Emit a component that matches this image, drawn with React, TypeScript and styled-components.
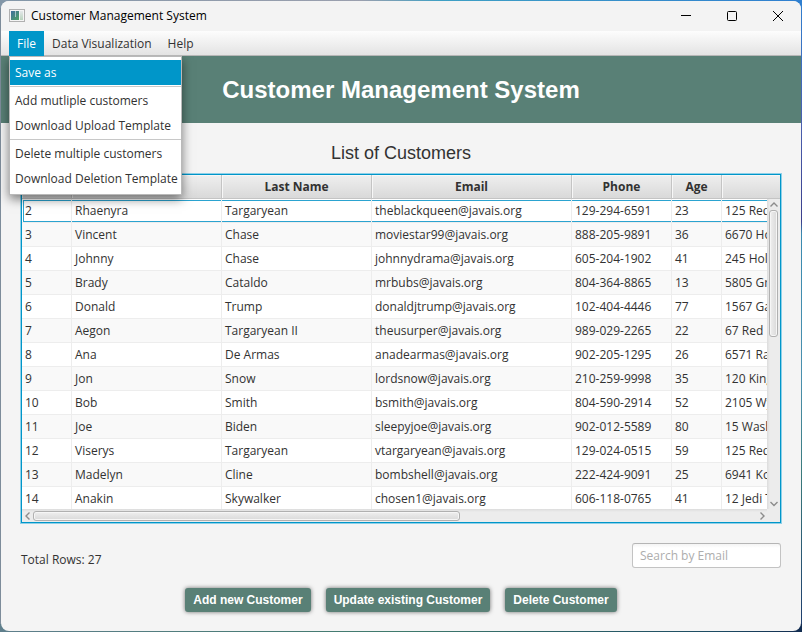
import React from 'react';
import styled, { createGlobalStyle, css } from 'styled-components';

const accent = '#0096c9';
const green = '#598076';

const GlobalStyle = createGlobalStyle`
  * { box-sizing: border-box; }
  html, body { margin: 0; height: 100%; }
  body { font: 12px/16px "Open Sans", "Noto Sans", sans-serif; color: #323232; }
  button, input { font: inherit; color: inherit; }
`;

const Desktop = styled.div`
  display: flex;
  height: 100vh;
  min-height: 480px;
  padding: 1px;
  background:
    linear-gradient(90deg, #8397a8 0%, #9a9fae 45%, #3d9fc4 55%, #2f7fd0 100%) top / 100% 8px no-repeat,
    linear-gradient(90deg, #5f7f8c 0%, #3f7a6c 50%, #1c4a63 90%, #122c50 100%) bottom / 100% 8px no-repeat,
    linear-gradient(180deg, #2f7fd0 0%, #4a5fae 20%, #3a3f8c 35%, #3a8ab0 37%, #4a90ae 60%, #3a7a7c 75%, #1c3a6c 100%) right / 8px 100% no-repeat,
    #7d8c9a;
`;

const Window = styled.div`
  flex: 1;
  min-width: 0;
  display: flex;
  flex-direction: column;
  border-radius: 8px;
  background: #f4f4f4;
`;

const TitleBar = styled.header`
  display: flex;
  align-items: center;
  height: 30px;
  flex: none;
  padding-left: 8px;
  border-radius: 8px 8px 0 0;
  background: #f3f3f3;
  color: #000;
`;

const WindowTitle = styled.span`
  flex: 1;
  padding-left: 6px;
`;

const CaptionButton = styled.button`
  display: grid;
  place-items: center;
  width: 46px;
  height: 30px;
  padding: 0;
  border: 0;
  background: none;
`;

const MenuBar = styled.nav`
  position: relative;
  z-index: 2;
  display: flex;
  flex: none;
  height: 25px;
  padding-left: 8px;
  border-bottom: 1px solid #b6b6b6;
  background: linear-gradient(#fdfdfd, #e3e3e3);
`;

const MenuButton = styled.button<{ $open?: boolean }>`
  height: 25px;
  padding: 0 8px;
  border: 0;
  background: ${p => (p.$open ? accent : 'none')};
  color: ${p => (p.$open ? '#fff' : '#323232')};
`;

const Menu = styled.div`
  position: absolute;
  top: 25px;
  left: 8px;
  width: 173px;
  padding: 3px 0;
  border: 1px solid #b9b9b9;
  background: #fff;
  box-shadow: 0 4px 10px rgba(0, 0, 0, 0.5);
  clip-path: inset(0 -20px -20px -20px);
`;

const MenuItem = styled.button<{ $active?: boolean }>`
  display: block;
  width: 100%;
  height: 25px;
  padding: 0 5px;
  border: 0;
  text-align: left;
  white-space: nowrap;
  background: ${p => (p.$active ? accent : 'none')};
  color: ${p => (p.$active ? '#fff' : '#323232')};
`;

const Separator = styled.hr`
  height: 1px;
  margin: 1px 0;
  border: 0;
  background: #c8c8c8;
`;

const Banner = styled.div`
  display: grid;
  place-items: center;
  flex: none;
  height: 67px;
  background: ${green};
`;

const BannerTitle = styled.h1`
  margin: 0;
  font: bold 24px/28px "Liberation Sans", Arial, sans-serif;
  color: #fff;
`;

const Content = styled.main`
  flex: 1;
  min-height: 0;
  display: flex;
  flex-direction: column;
  padding: 20px 20px 19px;
`;

const SectionTitle = styled.h2`
  margin: 0 0 10px;
  font: 18px/21px "Liberation Sans", Arial, sans-serif;
  text-align: center;
`;

const TableFrame = styled.div`
  flex: 1;
  min-height: 0;
  display: grid;
  grid-template: 24px minmax(0, 1fr) 13px / minmax(0, 1fr) 13px;
  border: 1px solid ${accent};
  box-shadow: 0 0 0 1px #8fd0e8;
  background: #ececec;
`;

const TableViewport = styled.div`
  grid-area: 1 / 1 / 3 / 3;
  overflow: hidden;
  background: #fff;
`;

const Table = styled.table`
  width: 0;
  min-width: 1300px;
  table-layout: fixed;
  border-collapse: separate;
  border-spacing: 0;
`;

const Col = styled.col<{ $width: number }>`
  width: ${p => p.$width}px;
`;

const HeadCell = styled.th`
  height: 24px;
  padding: 0;
  border-right: 1px solid #c4c4c4;
  border-bottom: 1px solid #c4c4c4;
  background: linear-gradient(#efefef, #d9d9d9);
  box-shadow: inset 1px 1px 0 #f7f7f7;
  font-weight: bold;
`;

const Row = styled.tr<{ $focused?: boolean }>`
  &:nth-child(even) { background: #f9f9f9; }
  ${p => p.$focused && css`
    td {
      box-shadow: inset 0 1px 0 #fff, inset 0 2px 0 #2ba3d0, inset 0 -1px 0 #2ba3d0;
    }
    td:first-child {
      box-shadow: inset 1px 1px 0 #fff, inset 2px 2px 0 #2ba3d0, inset 0 -1px 0 #2ba3d0;
    }
  `}
`;

const Cell = styled.td`
  height: 24px;
  padding: 0 3px;
  border-right: 1px solid #ededed;
  border-bottom: 1px solid #ededed;
  white-space: nowrap;
  overflow: hidden;
`;

const ScrollBar = styled.div<{ $vertical?: boolean }>`
  display: flex;
  align-items: center;
  z-index: 1;
  background: linear-gradient(${p => (p.$vertical ? '90deg' : '180deg')}, #dcdcdc, #ececec 3px);
  ${p => p.$vertical
    ? css`grid-area: 2 / 2; flex-direction: column;`
    : css`grid-area: 3 / 1;`}
`;

const Track = styled.div`
  display: flex;
  flex: 1;
  align-self: stretch;
`;

const Thumb = styled.div<{ $vertical?: boolean }>`
  border: 1px solid #b0b0b0;
  border-radius: 3px;
  box-shadow: inset 0 0 0 1px #f6f6f6;
  ${p => p.$vertical
    ? css`width: 9px; height: 44%; margin: 0 2px; background: linear-gradient(90deg, #efefef, #d9d9d9);`
    : css`height: 10px; width: 59%; margin: 2px 0 1px; background: linear-gradient(#efefef, #d9d9d9);`}
`;

const ArrowButton = styled.button`
  display: grid;
  place-items: center;
  flex: none;
  width: 11px;
  height: 11px;
  padding: 0;
  border: 0;
  background: none;
`;

const InfoRow = styled.div`
  display: flex;
  justify-content: space-between;
  align-items: center;
  flex: none;
  margin-top: 20px;
`;

const TotalRows = styled.span`
  padding-top: 8px;
`;

const SearchInput = styled.input`
  width: 149px;
  height: 25px;
  padding: 0 7px;
  border: 1px solid #c3c3c3;
  border-top-color: #b5b5b5;
  border-radius: 3px;
  background: linear-gradient(#f4f4f4, #fff 4px);
  &::placeholder { color: #adadad; opacity: 1; }
`;

const Actions = styled.div`
  display: flex;
  justify-content: center;
  flex: none;
  gap: 15px;
  margin-top: 20px;
`;

const ActionButton = styled.button`
  height: 24px;
  padding: 0 8px;
  border: 0;
  border-radius: 3px;
  background: ${green};
  box-shadow: 0 0 4px rgba(0, 0, 0, 0.55);
  font: bold 12px/16px "Liberation Sans", Arial, sans-serif;
  color: #fff;
`;

const AppIcon = () => (
  <svg width="16" height="14" viewBox="0 0 16 14" aria-hidden="true">
    <defs>
      <linearGradient id="pane" x1="0" y1="0" x2="1" y2="1">
        <stop offset="0" stopColor="#3f6f9c" />
        <stop offset="1" stopColor="#4fa364" />
      </linearGradient>
      <linearGradient id="side" x1="0" y1="0" x2="0" y2="1">
        <stop offset="0" stopColor="#e4e8ea" />
        <stop offset="1" stopColor="#b9d3bd" />
      </linearGradient>
    </defs>
    <rect x="0.5" y="0.5" width="15" height="12" fill="#f4f4f4" stroke="#b0b0b0" />
    <rect x="2" y="2" width="8" height="9" fill="url(#pane)" />
    <rect x="6" y="2" width="1" height="6" fill="#cfe0e6" opacity="0.7" />
    <rect x="11" y="2" width="3" height="9" fill="url(#side)" />
  </svg>
);

const arrows = {
  up: 'M1.5 6.5 5 3l3.5 3.5',
  down: 'M1.5 3 5 6.5 8.5 3',
  left: 'M6.5 1.5 3 5l3.5 3.5',
  right: 'M3.5 1.5 7 5 3.5 8.5',
};

const Arrow = ({ to }: { to: keyof typeof arrows }) => (
  <ArrowButton aria-label={`Scroll ${to}`}>
    <svg width="10" height="10" viewBox="0 0 10 10" fill="none" stroke="#8c8c8c" strokeWidth="1.4">
      <path d={arrows[to]} />
    </svg>
  </ArrowButton>
);

const columns = [
  { name: 'ID', width: 50 },
  { name: 'First Name', width: 150 },
  { name: 'Last Name', label: 'Last Name', width: 150 },
  { name: 'Email', label: 'Email', width: 200 },
  { name: 'Phone', label: 'Phone', width: 100 },
  { name: 'Age', label: 'Age', width: 50 },
  { name: 'Address', width: 600 },
];

const customers = [
  ['2', 'Rhaenyra', 'Targaryean', 'theblackqueen@javais.org', '129-294-6591', '23', '125 Red Keep'],
  ['3', 'Vincent', 'Chase', 'moviestar99@javais.org', '888-205-9891', '36', '6670 Hollywood'],
  ['4', 'Johnny', 'Chase', 'johnnydrama@javais.org', '605-204-1902', '41', '245 Hollywood'],
  ['5', 'Brady', 'Cataldo', 'mrbubs@javais.org', '804-364-8865', '13', '5805 Grove'],
  ['6', 'Donald', 'Trump', 'donaldjtrump@javais.org', '102-404-4446', '77', '1567 Gates'],
  ['7', 'Aegon', 'Targaryean II', 'theusurper@javais.org', '989-029-2265', '22', '67 Red Keep'],
  ['8', 'Ana', 'De Armas', 'anadearmas@javais.org', '902-205-1295', '26', '6571 Ranch'],
  ['9', 'Jon', 'Snow', 'lordsnow@javais.org', '210-259-9998', '35', '120 Kings'],
  ['10', 'Bob', 'Smith', 'bsmith@javais.org', '804-590-2914', '52', '2105 Wynn'],
  ['11', 'Joe', 'Biden', 'sleepyjoe@javais.org', '902-012-5589', '80', '15 Washington'],
  ['12', 'Viserys', 'Targaryean', 'vtargaryean@javais.org', '129-024-0515', '59', '125 Red Keep'],
  ['13', 'Madelyn', 'Cline', 'bombshell@javais.org', '222-424-9091', '25', '6941 Kooks'],
  ['14', 'Anakin', 'Skywalker', 'chosen1@javais.org', '606-118-0765', '41', '12 Jedi Temple'],
];

export default function App() {
  return (
    <Desktop>
      <GlobalStyle />
      <Window>
        <TitleBar>
          <AppIcon />
          <WindowTitle>Customer Management System</WindowTitle>
          <CaptionButton aria-label="Minimize">
            <svg width="10" height="10" stroke="#000"><path d="M0 4.5h10" /></svg>
          </CaptionButton>
          <CaptionButton aria-label="Maximize">
            <svg width="10" height="10" fill="none" stroke="#000"><rect x="0.5" y="0.5" width="9" height="9" rx="1" /></svg>
          </CaptionButton>
          <CaptionButton aria-label="Close">
            <svg width="10" height="10" stroke="#000"><path d="M0 0l10 10M10 0L0 10" /></svg>
          </CaptionButton>
        </TitleBar>
        <MenuBar>
          <MenuButton $open aria-expanded="true">File</MenuButton>
          <MenuButton>Data Visualization</MenuButton>
          <MenuButton>Help</MenuButton>
          <Menu role="menu">
            <MenuItem role="menuitem" $active>Save as</MenuItem>
            <Separator />
            <MenuItem role="menuitem">Add mutliple customers</MenuItem>
            <MenuItem role="menuitem">Download Upload Template</MenuItem>
            <Separator />
            <MenuItem role="menuitem">Delete multiple customers</MenuItem>
            <MenuItem role="menuitem">Download Deletion Template</MenuItem>
          </Menu>
        </MenuBar>
        <Banner>
          <BannerTitle>Customer Management System</BannerTitle>
        </Banner>
        <Content>
          <SectionTitle>List of Customers</SectionTitle>
          <TableFrame>
            <TableViewport>
              <Table>
                <colgroup>
                  {columns.map(c => <Col key={c.name} $width={c.width} />)}
                </colgroup>
                <thead>
                  <tr>
                    {columns.map(c => (
                      <HeadCell key={c.name} scope="col" aria-label={c.name}>{c.label}</HeadCell>
                    ))}
                  </tr>
                </thead>
                <tbody>
                  {customers.map((row, r) => (
                    <Row key={row[0]} $focused={r === 0}>
                      {row.map((value, i) => <Cell key={i}>{value}</Cell>)}
                    </Row>
                  ))}
                </tbody>
              </Table>
            </TableViewport>
            <ScrollBar $vertical>
              <Arrow to="up" />
              <Track><Thumb $vertical /></Track>
              <Arrow to="down" />
            </ScrollBar>
            <ScrollBar>
              <Arrow to="left" />
              <Track><Thumb /></Track>
              <Arrow to="right" />
            </ScrollBar>
          </TableFrame>
          <InfoRow>
            <TotalRows>Total Rows: 27</TotalRows>
            <SearchInput aria-label="Search by Email" placeholder="Search by Email" />
          </InfoRow>
          <Actions>
            <ActionButton>Add new Customer</ActionButton>
            <ActionButton>Update existing Customer</ActionButton>
            <ActionButton>Delete Customer</ActionButton>
          </Actions>
        </Content>
      </Window>
    </Desktop>
  );
}
